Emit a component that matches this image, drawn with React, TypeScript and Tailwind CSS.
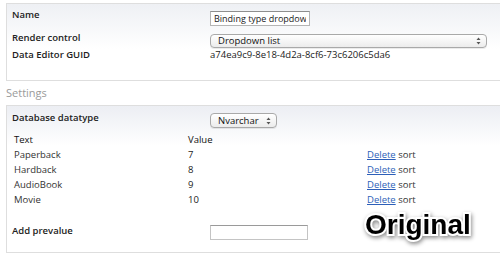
import { useState } from 'react';

const prevalues = [
  { text: 'Paperback', value: '7' },
  { text: 'Hardback', value: '8' },
  { text: 'AudioBook', value: '9' },
  { text: 'Movie', value: '10' },
];

const SelectArrows = () => (
  <svg width="5" height="8" viewBox="0 0 5 8" className="shrink-0">
    <path d="M2.5 0.5 L4.5 3 L0.5 3 Z" fill="#555" />
    <path d="M2.5 7.5 L4.5 5 L0.5 5 Z" fill="#555" />
  </svg>
);

const FakeSelect = ({ label, className }: { label: string; className: string }) => (
  <div
    className={`flex items-center justify-between rounded-[4px] border border-[#a9a9a9] bg-[linear-gradient(#ffffff,#ececec)] pl-[7px] pr-[5px] text-[#111] shadow-[0_1px_0_rgba(0,0,0,0.08)] ${className}`}
  >
    <span>{label}</span>
    <SelectArrows />
  </div>
);

export default function App() {
  const [name, setName] = useState('Binding type dropdown');

  return (
    <div
      className="relative h-[255px] w-[500px] overflow-hidden bg-white text-[9.5px] text-[#222]"
      style={{ fontFamily: '"Open Sans", "Liberation Sans", sans-serif' }}
    >
      {/* general properties */}
      <div className="ml-[6px] mt-[3px] w-[520px] border border-[#dedede] bg-[linear-gradient(#eef0f4,#ffffff_45px)] pb-[19px] pl-[5px] pt-[5px]">
        <div className="flex h-[23px] items-start leading-[12px]">
          <div className="w-[198px] font-semibold">Name</div>
          <input
            value={name}
            onChange={(e) => setName(e.target.value)}
            className="mt-[2px] h-[15px] w-[100px] border border-[#b5b5b5] border-t-[#8e8e8e] bg-white px-[3px] text-[9px] text-[#222] outline-none"
          />
        </div>
        <div className="flex h-[17px] items-start leading-[12px]">
          <div className="w-[198px] font-semibold">Render control</div>
          <FakeSelect label="Dropdown list" className="mt-[2px] h-[14px] w-[277px] shrink-0" />
        </div>
        <div className="flex h-[12px] items-start leading-[12px]">
          <div className="w-[198px] font-semibold">Data Editor GUID</div>
          <div>a74ea9c9-8e18-4d2a-8cf6-73c6206c5da6</div>
        </div>
      </div>

      <div className="ml-[6px] mt-[5px] h-[19px] text-[11px] leading-[14px] text-[#9a9a9a]">Settings</div>

      {/* settings */}
      <div className="ml-[6px] w-[520px] border border-[#dedede] bg-[linear-gradient(#eceef3,#ffffff_40px)] pb-[14px] pl-[5px] pt-[4px] leading-[15px]">
        <div className="flex h-[22px] items-start">
          <div className="w-[198px] font-semibold">Database datatype</div>
          <FakeSelect label="Nvarchar" className="mt-[3px] h-[15px] w-[67px]" />
        </div>
        <div className="grid grid-cols-[174px_179px_1fr] pl-[2px]">
          <div className="text-[#111]">Text</div>
          <div className="text-[#111]">Value</div>
          <div />
          {prevalues.map((p) => (
            <div key={p.text} className="contents">
              <div className="text-[#333]">{p.text}</div>
              <div className="text-[#222]">{p.value}</div>
              <div>
                <a href="#" className="text-[#2d5fb8] underline">Delete</a>{' '}
                <span className="text-[#333]">sort</span>
              </div>
            </div>
          ))}
        </div>
        <div className="mt-[16px] flex h-[15px] items-start">
          <div className="w-[198px] font-semibold">Add prevalue</div>
          <input className="mt-[2px] h-[15px] w-[98px] border border-[#c4c4c4] border-t-[#9a9a9a] bg-white outline-none" />
        </div>
      </div>

      <div
        className="absolute left-[365px] top-[209px] text-[28px] font-bold leading-[32px] text-black [-webkit-text-stroke:4px_white] [paint-order:stroke_fill] drop-shadow-[1px_2px_2px_rgba(0,0,0,0.45)]"
        style={{ fontFamily: '"Liberation Sans", Arial, sans-serif' }}
      >
        Original
      </div>
    </div>
  );
}
